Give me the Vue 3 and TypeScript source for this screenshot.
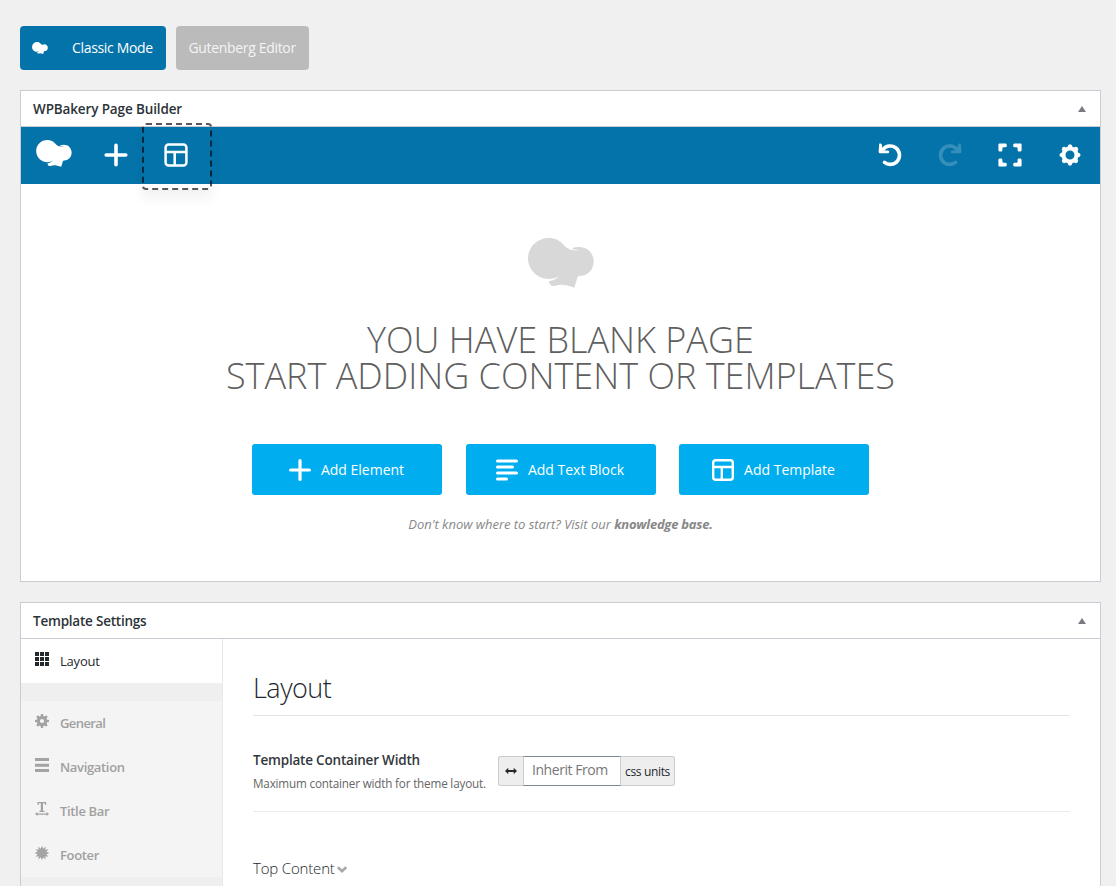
<script setup lang="ts">
interface NavItem {
  label: string
  icon: 'gear' | 'menu' | 'title' | 'burst'
}

const hat =
  'M62 0C82 0 96 8 107 21C114 29 121 33 129 35C138 37 147 38 154 37C147 36 138 35 131 31C138 28 146 27 154 27C179 27 197 46 197 71C197 96 177 114 155 114C151 114 149 116 148 119L139 149C125 143 110 140 98 140C88 141 80 145 73 144C67 142 63 137 63 130C75 128 87 122 94 114C85 120 73 123 62 123C28 123 0 95 0 61C0 27 28 0 62 0Z'

const navItems: NavItem[] = [
  { label: 'General', icon: 'gear' },
  { label: 'Navigation', icon: 'menu' },
  { label: 'Title Bar', icon: 'title' },
  { label: 'Footer', icon: 'burst' },
]

// Star-shaped outline with alternating outer and inner radii
function star(points: number, outer: number, inner: number, c: number): string {
  return Array.from({ length: points * 2 }, (_, i) => {
    const r = i % 2 ? inner : outer
    const a = (Math.PI * i) / points - Math.PI / 2
    return `${(c + r * Math.cos(a)).toFixed(2)},${(c + r * Math.sin(a)).toFixed(2)}`
  }).join(' ')
}

const burst = star(12, 7.5, 4.5, 7)
const teeth = Array.from({ length: 8 }, (_, i) => i * 45)
</script>

<template>
  <div class="page">
    <div class="modes">
      <button class="mode mode-classic">
        <svg class="hat-small" viewBox="0 0 198 150"><path :d="hat" fill="#fff" /></svg>
        <span>Classic Mode</span>
      </button>
      <button class="mode mode-gutenberg"><span>Gutenberg Editor</span></button>
    </div>

    <section class="box builder">
      <header class="box-head">
        <h2>WPBakery Page Builder</h2>
        <svg class="caret" viewBox="0 0 8 6"><path d="M4 0L8 6H0Z" fill="#787c82" /></svg>
      </header>
      <div class="toolbar">
        <div class="tool tool-logo">
          <svg width="36" height="27" viewBox="0 0 198 150"><path :d="hat" fill="#fff" /></svg>
        </div>
        <div class="tool">
          <svg width="24" height="24" viewBox="0 0 24 24"><path d="M12 2.2V21.8M2.2 12H21.8" stroke="#fff" stroke-width="3.6" stroke-linecap="round" /></svg>
        </div>
        <div class="tool tool-active">
          <svg width="24" height="24" viewBox="0 0 24 24" fill="none" stroke="#fff" stroke-width="2.5"><rect x="1.6" y="1.6" width="20.8" height="20.8" rx="3" /><path d="M1.6 9H22.4M10.7 9V22.4" /></svg>
        </div>
        <div class="spacer"></div>
        <div class="tool">
          <svg width="24" height="24" viewBox="0 0 24 24"><path d="M4.8 6.8A9.2 9.2 0 1 1 6.5 19.3" fill="none" stroke="#fff" stroke-width="3.6" stroke-linecap="round" /><path d="M1.2 .8C2.3 .2 3.8 .8 3.9 2L4.3 5L6.5 7.4L10 7.6C11.5 7.8 11.7 9.8 10.3 10.3H2.2Q.6 10.3 .6 8.8Z" fill="#fff" /></svg>
        </div>
        <div class="tool tool-redo">
          <svg width="24" height="24" viewBox="0 0 24 24"><path d="M4.8 6.8A9.2 9.2 0 1 1 6.5 19.3" fill="none" stroke="#fff" stroke-width="3.6" stroke-linecap="round" /><path d="M1.2 .8C2.3 .2 3.8 .8 3.9 2L4.3 5L6.5 7.4L10 7.6C11.5 7.8 11.7 9.8 10.3 10.3H2.2Q.6 10.3 .6 8.8Z" fill="#fff" /></svg>
        </div>
        <div class="tool">
          <svg width="24" height="24" viewBox="0 0 24 24"><g fill="#fff"><path id="corner" d="M1.5 .5H7.5Q8.8 .6 8.8 2V3.5L7.6 4.2H5.2L4.4 5V7.5L3.6 8.5H1.5Q.4 8.4 .4 7V1.6Q.4 .5 1.5 .5Z" /><use href="#corner" transform="matrix(-1 0 0 1 24 0)" /><use href="#corner" transform="matrix(1 0 0 -1 0 24)" /><use href="#corner" transform="matrix(-1 0 0 -1 24 24)" /></g></svg>
        </div>
        <div class="tool">
          <svg width="24" height="24" viewBox="0 0 24 24"><circle cx="12" cy="12" r="6.5" fill="none" stroke="#fff" stroke-width="4" /><path v-for="a in teeth" :key="a" d="M9.2 4.6L10.4 2.1Q12 .6 13.6 2.1L14.8 4.6Z" fill="#fff" :transform="`rotate(${a} 12 12)`" /></svg>
        </div>
      </div>

      <div class="blank">
        <svg class="hat-large" viewBox="0 0 198 150"><path :d="hat" fill="#d8d8d8" /></svg>
        <h1>YOU HAVE BLANK PAGE<br />START ADDING CONTENT OR TEMPLATES</h1>
        <div class="actions">
          <button class="action">
            <svg width="22" height="22" viewBox="0 0 22 22"><path d="M11 1.6V20.4M1.6 11H20.4" stroke="#fff" stroke-width="3.2" stroke-linecap="round" /></svg>
            <span>Add Element</span>
          </button>
          <button class="action">
            <svg width="22" height="22" viewBox="0 0 22 22"><path d="M1.5 2H20.5M1.5 8H16.5M1.5 14H20.5M1.5 20H10.5" stroke="#fff" stroke-width="3" stroke-linecap="round" /></svg>
            <span>Add Text Block</span>
          </button>
          <button class="action">
            <svg width="22" height="22" viewBox="0 0 22 22" fill="none" stroke="#fff" stroke-width="2.4"><rect x="1.2" y="1.2" width="19.6" height="19.6" rx="2.6" /><path d="M1.2 8H20.8M9.8 8V20.8" /></svg>
            <span>Add Template</span>
          </button>
        </div>
        <p class="hint">Don't know where to start? Visit our <b>knowledge base.</b></p>
      </div>
    </section>

    <section class="box settings">
      <header class="box-head">
        <h2 class="settings-title">Template Settings</h2>
        <svg class="caret" viewBox="0 0 8 6"><path d="M4 0L8 6H0Z" fill="#787c82" /></svg>
      </header>
      <div class="settings-body">
        <nav>
          <div class="nav-item nav-current">
            <svg viewBox="0 0 14 14" fill="#23282d"><template v-for="y in 3" :key="y"><rect v-for="x in 3" :key="x" :x="(x - 1) * 5" :y="(y - 1) * 5" width="4" height="4" /></template></svg>
            <span>Layout</span>
          </div>
          <div class="nav-gap"></div>
          <div v-for="item in navItems" :key="item.label" class="nav-item">
            <svg v-if="item.icon === 'gear'" viewBox="0 0 14 14"><circle cx="7" cy="7" r="3.7" fill="none" stroke="#a3a3a3" stroke-width="3.2" /><rect v-for="a in teeth" :key="a" x="5.8" y="0" width="2.4" height="3" fill="#a3a3a3" :transform="`rotate(${a} 7 7)`" /></svg>
            <svg v-else-if="item.icon === 'menu'" viewBox="0 0 14 14"><path d="M0 1.5H14M0 7.3H14M0 12.5H14" stroke="#a3a3a3" stroke-width="3" /></svg>
            <svg v-else-if="item.icon === 'title'" viewBox="0 0 14 14" fill="#a3a3a3"><path d="M2.5 0H11.2V3H10.2L9.6 1.2H8V8.6L9.5 9V10H4.3V9L5.8 8.6V1.2H4.1L3.5 3H2.5ZM0 12L2.5 10V11.4H11.5V10L14 12L11.5 14V12.7H2.5V14Z" /></svg>
            <svg v-else viewBox="0 0 14 14"><polygon :points="burst" fill="#a3a3a3" /></svg>
            <span :class="'label-' + item.icon">{{ item.label }}</span>
          </div>
        </nav>
        <div class="panel">
          <h3>Layout</h3>
          <div class="row">
            <div class="field-label">
              <strong>Template Container Width</strong>
              <small>Maximum container width for theme layout.</small>
            </div>
            <div class="field">
              <span class="addon addon-icon"><svg width="12" height="8" viewBox="0 0 12 8"><path d="M0 4L3.3 .8V3H8.7V.8L12 4L8.7 7.2V5H3.3V7.2Z" fill="#23282d" /></svg></span>
              <span class="input"><span>Inherit From</span></span>
              <span class="addon addon-units"><span>css units</span></span>
            </div>
          </div>
          <div class="top-content">
            <span>Top Content</span>
            <svg width="10" height="7" viewBox="0 0 10 7"><path d="M.8 1.2L5 5.2L9.2 1.2" fill="none" stroke="#a8a8a8" stroke-width="2.6" /></svg>
          </div>
        </div>
      </div>
    </section>
  </div>
</template>

<style>
body {
  background: #f0f0f0;
  overflow: hidden;
}
</style>

<style scoped>
.page {
  box-sizing: border-box;
  width: 1116px;
  height: 886px;
  overflow: hidden;
  padding: 26px 15px 0 20px;
  background: #f0f0f0;
  font-family: "Open Sans", "Noto Sans", sans-serif;
  color: #23282d;
}
h1, h2, h3, p { margin: 0; }
svg { display: block; flex: none; }
span, small, strong, h2 { white-space: nowrap; }
button { border: 0; padding: 0; font: inherit; color: #fff; }
.modes { display: flex; gap: 10px; height: 44px; }
.mode { display: flex; align-items: center; border-radius: 4px; font-size: 14px; letter-spacing: -.33px; }
.mode span { padding-bottom: 1px; }
.mode-classic { width: 146px; background: #0473aa; padding-left: 12px; gap: 24px; }
.mode-gutenberg { width: 133px; background: #bbb; padding-left: 12.5px; color: #f4f4f4; }
.hat-small { width: 16px; height: 12px; }
.box { box-sizing: border-box; width: 1081px; border: 1px solid #c9ccd3; background: #fff; }
.builder { margin-top: 20px; height: 492px; }
.settings { margin-top: 20px; height: 320px; }
.box-head {
  display: flex;
  align-items: center;
  justify-content: space-between;
  height: 35px;
  padding: 0 14px 0 12px;
  border-bottom: 1px solid #c9ccd3;
}
h2 { font-size: 13.5px; font-weight: 600; line-height: 20px; letter-spacing: -.13px; color: #2c3338; }
.settings-title { letter-spacing: -.22px; }
.caret { width: 8px; height: 6px; }
.toolbar { display: flex; height: 57px; background: #0473aa; }
.tool { display: flex; align-items: center; justify-content: center; width: 60px; position: relative; box-sizing: border-box; }
.tool svg { margin-bottom: 1px; }
.tool-logo { width: 65px; padding-bottom: 3px; }
.tool-redo { opacity: .2; }
.tool-redo svg { transform: scaleX(-1); }
.tool-active::after {
  content: "";
  position: absolute;
  left: -4px;
  top: -4px;
  width: 66px;
  height: 63px;
  border: 2px dashed rgba(0, 0, 0, .65);
  border-radius: 4px;
  box-shadow: 0 9px 12px rgba(0, 0, 0, .05);
}
.spacer { flex: 1; }
.blank { display: flex; flex-direction: column; align-items: center; padding-top: 54px; }
.hat-large { width: 66px; height: 50px; }
h1 {
  margin-top: 34px;
  font-size: 36px;
  line-height: 36px;
  font-weight: 300;
  color: #5f5f5f;
  text-align: center;
  white-space: nowrap;
}
.actions { display: flex; gap: 23.5px; margin-top: 50px; }
.action {
  display: flex;
  align-items: center;
  justify-content: center;
  gap: 10px;
  width: 190px;
  height: 51px;
  padding-right: 1px;
  border-radius: 3px;
  background: #00aeef;
  font-size: 14px;
}
.hint { margin-top: 20px; font-size: 13px; line-height: 18px; font-style: italic; color: #888; letter-spacing: -.03px; }
.hint b { letter-spacing: -.24px; }
.settings-body { display: flex; height: 282px; }
nav { box-sizing: border-box; width: 202px; background: #efefef; border-right: 1px solid #e8e8e8; }
.nav-item {
  display: flex;
  align-items: center;
  gap: 11px;
  height: 44px;
  padding-left: 14px;
  background: #f4f4f4;
  color: #a0a0a0;
  font-size: 13px;
  font-weight: 600;
  letter-spacing: -.33px;
}
.label-gear { letter-spacing: -.6px; }
.nav-item svg { width: 14px; height: 14px; margin-bottom: 4px; }
.nav-current { background: #fff; color: #23282d; font-weight: 500; letter-spacing: -.2px; }
.nav-gap { height: 18px; }
.panel { width: 817px; padding: 29px 0 0 30px; }
h3 { height: 47px; border-bottom: 1px solid #e5e5e5; font-size: 27px; line-height: 40px; font-weight: 300; letter-spacing: -.5px; }
.row { display: flex; align-items: flex-start; box-sizing: border-box; height: 96px; padding-top: 33px; border-bottom: 1px solid #ebebeb; }
.field-label { display: flex; flex-direction: column; width: 245px; }
strong { font-size: 13.5px; line-height: 22px; font-weight: 600; letter-spacing: -.2px; color: #32373c; }
small { font-size: 11.7px; line-height: 24px; letter-spacing: -.18px; color: #666; }
.field { display: flex; height: 30px; box-sizing: border-box; margin-top: 7px; }
.addon { display: flex; align-items: center; justify-content: center; box-sizing: border-box; border: 1px solid #ccc; background: #eee; font-size: 12px; letter-spacing: -.35px; }
.addon-icon { width: 25px; border-right: 0; border-radius: 3px 0 0 3px; }
.addon-units { width: 54px; border-left: 0; border-radius: 0 3px 3px 0; padding-top: 1px; }
.input { display: flex; align-items: center; box-sizing: border-box; width: 98px; padding: 0 0 3px 8px; border: 1px solid #ccc; border-top-color: #7e8993; border-bottom-color: #7e8993; font-size: 14px; letter-spacing: -.45px; color: #777; }
.top-content { display: flex; align-items: center; gap: 2px; margin-top: 45px; font-size: 15px; line-height: 22px; font-weight: 300; letter-spacing: -.17px; }
.top-content svg { margin-top: 2px; }
</style>
